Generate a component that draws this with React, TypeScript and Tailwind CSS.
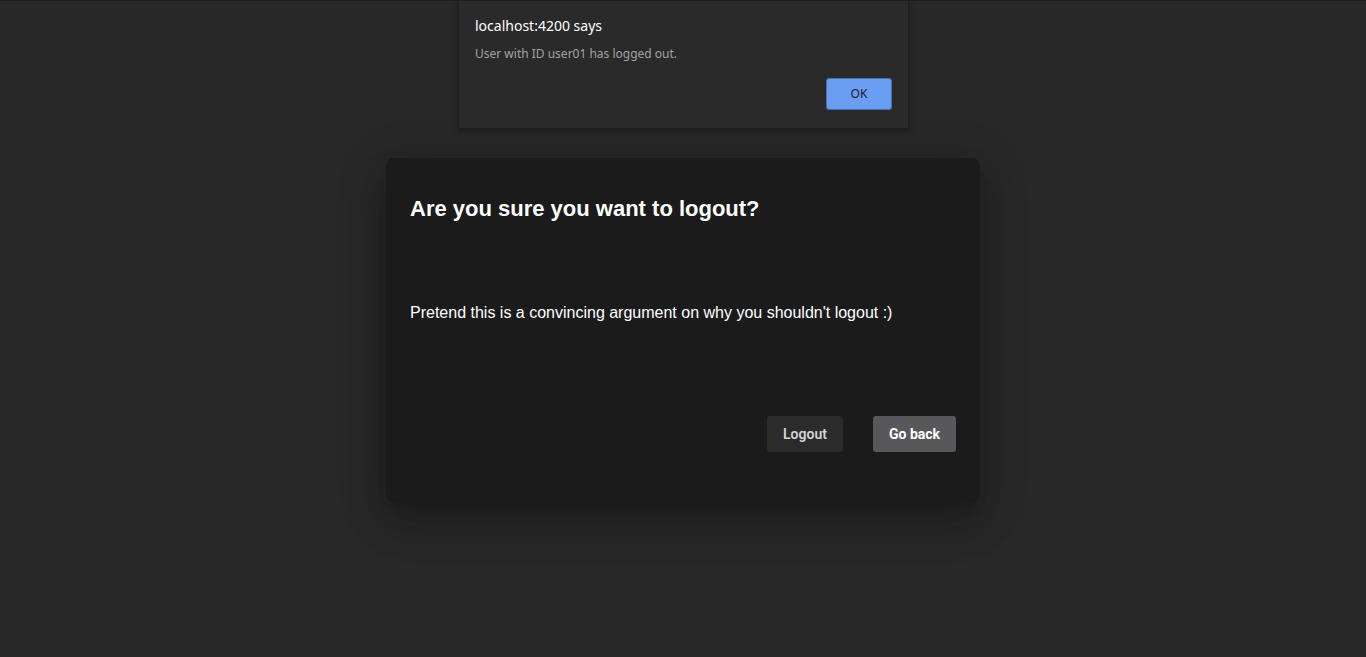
import React from "react";

export default function App() {
  return (
    <div className="relative h-[657px] w-full overflow-hidden border-t border-[#1c1c1c] bg-[#282828]">
      {/* Modal */}
      <div className="flex justify-center pt-[157px]">
        <div className="flex h-[344px] w-[594px] flex-col rounded-[8px] bg-[#1b1b1b] px-6 pb-[50px] pt-[38px] shadow-[0_11px_15px_-7px_rgba(0,0,0,0.2),0_24px_38px_3px_rgba(0,0,0,0.14),0_9px_46px_8px_rgba(0,0,0,0.12)]">
          <h2 className="text-[22px] font-bold leading-[26px] text-white [font-family:'Liberation_Sans',Arial,sans-serif]">
            Are you sure you want to logout?
          </h2>
          <p className="mt-[81px] text-[16px] leading-5 text-white [font-family:'Liberation_Sans',Arial,sans-serif]">
            Pretend this is a convincing argument on why you shouldn't logout :)
          </p>
          <div className="mt-auto flex justify-end gap-[30px]">
            <button className="h-9 w-[76px] rounded-[3px] bg-[#2b2b2b] text-[14px] font-semibold text-[#d4d4d4] [font-family:Roboto,sans-serif]">
              Logout
            </button>
            <button className="h-9 w-[83px] rounded-[3px] bg-[#58585a] text-[14px] font-bold text-white [font-family:Roboto,sans-serif]">
              Go back
            </button>
          </div>
        </div>
      </div>

      {/* Browser alert overlay */}
      <div className="absolute left-[458px] top-0 flex h-[128px] w-[451px] flex-col border-x border-b border-[#1d1d1d] bg-[#2a2a2a] px-4 pt-[15px] shadow-[0_2px_6px_rgba(0,0,0,0.35)] [font-family:'Noto_Sans','Open_Sans',sans-serif]">
        <div className="text-[14px] leading-5 text-white">localhost:4200 says</div>
        <div className="mt-[8px] text-[12px] leading-5 text-[#a3a3a3]">User with ID user01 has logged out.</div>
        <div className="mt-[14px] flex justify-end">
          <button className="h-8 w-[66px] rounded-[3px] border border-[#4a6fae] bg-[#6a9ef2] text-[12px] text-[#1a1a1a]">
            OK
          </button>
        </div>
      </div>
    </div>
  );
}
